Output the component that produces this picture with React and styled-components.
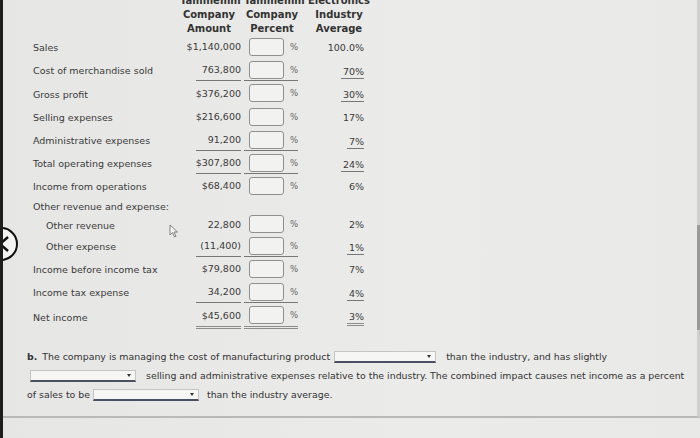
import styled, { createGlobalStyle } from 'styled-components';

const GlobalStyle = createGlobalStyle`
  body {
    margin: 0;
    background: #e8e8e6;
    font-family: "DejaVu Sans", Verdana, sans-serif;
    color: #3a3a3a;
  }
`;

const Page = styled.div`
  position: relative;
  width: 700px;
  height: 438px;
  overflow: hidden;
  background: linear-gradient(90deg, #e6e6e4 0%, #ebebe9 60%, #e9e9e7 100%);
  border-left: 3px solid #1e1e1e;
  box-sizing: border-box;
`;

const Content = styled.div`
  height: 424px;
  border-right: 3px solid #cfcfcd;
  border-bottom: 2px solid #b9b9b7;
  box-sizing: border-box;
`;

const Header = styled.div`
  display: flex;
  margin: -6px 0 0 177px;
  gap: 6px;
`;

const HeadCol = styled.div`
  width: ${(p) => p.w}px;
  text-align: center;
  font-weight: bold;
  font-size: 10px;
  line-height: 14px;
  color: #333;
`;

const Table = styled.div`
  padding: 0 0 0 30px;
`;

const Row = styled.div`
  display: grid;
  grid-template-columns: 163px 45px 57px 66px;
  height: ${(p) => p.h || 23}px;
  font-size: 9.5px;
`;

const Label = styled.div`
  display: flex;
  align-items: center;
  padding-left: ${(p) => (p.indent ? 13 : 0)}px;
`;

const ruleStyle = (p) =>
  p.rule === 'double'
    ? 'border-bottom: 3px double #8c8c8c;'
    : p.rule
    ? 'border-bottom: 1px solid #777;'
    : 'border-bottom: 1px solid transparent;';

const Amount = styled.div`
  display: flex;
  align-items: center;
  justify-content: flex-end;
  ${ruleStyle}
  margin-bottom: 1px;
`;

const PctCell = styled.div`
  display: flex;
  align-items: center;
  padding-left: 5px;
  gap: 6px;
  ${ruleStyle}
  margin: 0 0 1px 3px;
  font-size: 8.5px;
  color: #666;
`;

const PctInput = styled.div`
  width: 35px;
  height: 16px;
  border: 1px solid #8f8f8f;
  border-radius: 3px;
  background: #f2f2f0;
`;

const Industry = styled.div`
  display: flex;
  align-items: center;
  justify-content: flex-end;
`;

const IndValue = styled.span`
  display: inline-block;
  padding: 0 0 1px 2px;
  margin-top: ${(p) => (p.rule ? 3 : 0)}px;
  ${(p) =>
    p.rule === 'double'
      ? 'border-bottom: 3px double #8c8c8c;'
      : p.rule
      ? 'border-bottom: 1px solid #777;'
      : ''}
`;

const PartB = styled.div`
  margin: 17px 0 0 24px;
  font-size: 9.4px;
  color: #333;
`;

const Line = styled.div`
  display: flex;
  align-items: center;
  height: 19px;
  white-space: nowrap;
`;

const Letter = styled.b`
  margin-right: 5px;
`;

const Dropdown = styled.span`
  position: relative;
  display: inline-block;
  width: ${(p) => p.w || 104}px;
  height: 9px;
  margin: 0 ${(p) => p.mr || 10}px 0 ${(p) => p.ml || 3}px;
  background: #f6f6f4;
  border: 1px solid #c4c4c2;
  border-bottom: 2px solid #4a5062;

  &::after {
    content: '';
    position: absolute;
    right: 4px;
    top: 3px;
    border-left: 2.5px solid transparent;
    border-right: 2.5px solid transparent;
    border-top: 3px solid #333;
  }
`;

const BackButton = styled.div`
  position: absolute;
  left: -19px;
  top: 227px;
  width: 34px;
  height: 34px;
  border: 2px solid #111;
  border-radius: 50%;
  background: #f4f4f2;
  display: flex;
  align-items: center;
  justify-content: flex-end;
  padding-right: 6px;
  box-sizing: border-box;
`;

const Cursor = styled.svg`
  position: absolute;
  left: 166px;
  top: 224px;
`;

const ScrollThumb = styled.div`
  position: absolute;
  right: 0;
  top: 225px;
  width: 3px;
  height: 105px;
  background: #9a9a98;
`;

const rows = [
  { label: 'Sales', amt: '$1,140,000', ind: '100.0%' },
  { label: 'Cost of merchandise sold', amt: '763,800', ind: '70%', rule: true, indRule: true },
  { label: 'Gross profit', amt: '$376,200', ind: '30%', h: 24, indRule: true },
  { label: 'Selling expenses', amt: '$216,600', ind: '17%' },
  { label: 'Administrative expenses', amt: '91,200', ind: '7%', rule: true, indRule: true },
  { label: 'Total operating expenses', amt: '$307,800', ind: '24%', rule: true, indRule: true },
  { label: 'Income from operations', amt: '$68,400', ind: '6%' },
  { label: 'Other revenue and expense:', heading: true, h: 17 },
  { label: 'Other revenue', amt: '22,800', ind: '2%', indent: true, h: 20 },
  { label: 'Other expense', amt: '(11,400)', ind: '1%', indent: true, rule: true, indRule: true },
  { label: 'Income before income tax', amt: '$79,800', ind: '7%' },
  { label: 'Income tax expense', amt: '34,200', ind: '4%', rule: true, indRule: true },
  { label: 'Net income', amt: '$45,600', ind: '3%', h: 26, rule: 'double', indRule: 'double' },
];

export default function App() {
  return (
    <>
      <GlobalStyle />
      <Page>
        <Content>
          <Header>
            <HeadCol w={58}>
              Tammemm
              <br />
              Company
              <br />
              Amount
            </HeadCol>
            <HeadCol w={56}>
              Tammemm
              <br />
              Company
              <br />
              Percent
            </HeadCol>
            <HeadCol w={66}>
              Electronics
              <br />
              Industry
              <br />
              Average
            </HeadCol>
          </Header>
          <Table>
            {rows.map((r) => (
              <Row key={r.label} h={r.h}>
                <Label indent={r.indent}>{r.label}</Label>
                {r.heading ? null : (
                  <>
                    <Amount rule={r.rule}>{r.amt}</Amount>
                    <PctCell rule={r.rule}>
                      <PctInput />%
                    </PctCell>
                    <Industry>
                      <IndValue rule={r.indRule}>{r.ind}</IndValue>
                    </Industry>
                  </>
                )}
              </Row>
            ))}
          </Table>
          <PartB>
            <Line>
              <Letter>b.</Letter>The company is managing the cost of manufacturing product
              <Dropdown w={100} ml={4} />
              than the industry, and has slightly
            </Line>
            <Line>
              <Dropdown w={104} ml={0} />
              selling and administrative expenses relative to the industry. The combined impact
              causes net income as a percent
            </Line>
            <Line>
              of sales to be
              <Dropdown w={104} ml={3} mr={8} />
              than the industry average.
            </Line>
          </PartB>
        </Content>
        <ScrollThumb />
        <BackButton>
          <svg width="12" height="16" viewBox="0 0 12 16">
            <path d="M10 1 L2 8 L10 15" fill="none" stroke="#111" strokeWidth="2.6" />
          </svg>
        </BackButton>
        <Cursor width="10" height="14" viewBox="0 0 10 14">
          <path
            d="M1 1 L1 11 L3.5 8.6 L5.5 13 L7 12.3 L5 8 L8.5 8 Z"
            fill="#f4f4f4"
            stroke="#777"
            strokeWidth="0.9"
          />
        </Cursor>
      </Page>
    </>
  );
}
